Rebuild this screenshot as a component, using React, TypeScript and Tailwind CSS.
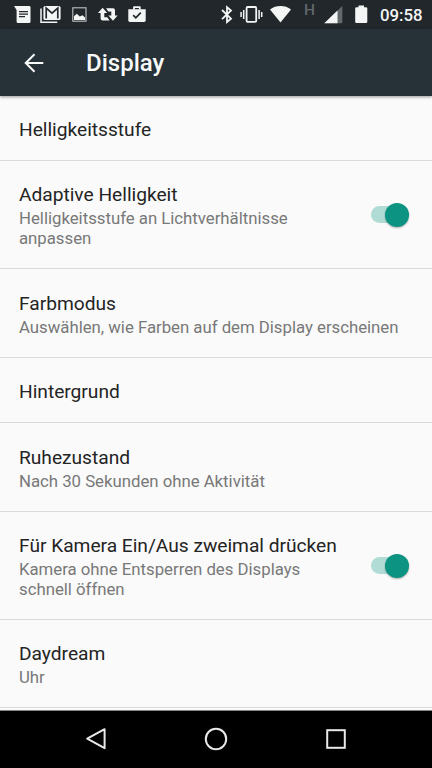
import { useState } from "react"
import clsx from "clsx"

const settings = [
  { title: "Helligkeitsstufe", height: "h-[65px]" },
  {
    title: "Adaptive Helligkeit",
    summary: "Helligkeitsstufe an Lichtverhältnisse anpassen",
    toggle: true,
    height: "h-[108px]",
  },
  { title: "Farbmodus", summary: "Auswählen, wie Farben auf dem Display erscheinen", height: "h-[89px]" },
  { title: "Hintergrund", height: "h-[65px]" },
  { title: "Ruhezustand", summary: "Nach 30 Sekunden ohne Aktivität", height: "h-[89px]" },
  {
    title: "Für Kamera Ein/Aus zweimal drücken",
    summary: "Kamera ohne Entsperren des Displays schnell öffnen",
    toggle: true,
    height: "h-[108px]",
  },
  { title: "Daydream", summary: "Uhr", height: "h-[88px]" },
]

function StatusBar() {
  return (
    <div className="flex h-[29px] items-start bg-[#21272b] pl-[14px] text-[#f4f6f6]">
      {/* Message */}
      <svg className="h-[29px] w-[17px]" viewBox="0 0 17 29" fill="currentColor">
        <path d="M0 6H15.2Q16.5 6 16.5 7.3V21.5Q16.5 23 15 23H4Q2.6 23 2.6 21.5V10Z" />
        <path d="M5 11.7H14M5 14.2H14M5 16.7H11" stroke="#21272b" strokeWidth="1.3" />
      </svg>
      {/* Gmail */}
      <svg className="ml-[9px] h-[29px] w-[21px]" viewBox="0 0 21 29" fill="none">
        <path d="M1 8.6V22.2H17.3" stroke="currentColor" strokeWidth="1.5" />
        <rect x="3.4" y="5.9" width="17.2" height="14.2" rx="1.6" fill="currentColor" />
        <path d="M6.2 18.6V8.2L12 13.2L17.8 8.2V18.6" stroke="#21272b" strokeWidth="1.7" />
      </svg>
      {/* Screenshot */}
      <svg className="ml-[11px] h-[29px] w-[15px]" viewBox="0 0 15 29">
        <rect x="0.8" y="7.8" width="13.2" height="13.4" fill="none" stroke="currentColor" strokeOpacity="0.75" strokeWidth="1.1" />
        <path d="M2 20V16.2L4.8 13.8L7.8 16.4L10.5 15.2L13 17.4V20Z" fill="currentColor" />
      </svg>
      {/* Retweet */}
      <svg className="ml-[11px] h-[29px] w-[20px]" viewBox="0 0 20 29" fill="currentColor">
        <path d="M4.6 7.8L9.2 13H6.3V17.2H9.3L11.5 20.4H4.6Q2.6 20.4 2.6 18.4V13H0Z" />
        <path d="M15 20.8L10.4 15.6H13.3V11.4H10.3L8.1 8.2H15Q17 8.2 17 10.2V15.6H19.6Z" />
      </svg>
      {/* Play Store */}
      <svg className="ml-[10px] h-[29px] w-[18px]" viewBox="0 0 18 29" fill="none">
        <path d="M6 9.5V7.2H11.8V9.5" stroke="currentColor" strokeWidth="1.8" strokeLinejoin="round" />
        <path d="M0.3 9.2H17.7V20.3Q17.7 22 16 22H2Q0.3 22 0.3 20.3Z" fill="currentColor" />
        <path d="M5.2 15.2L7.8 17.8L12.8 12.6" stroke="#21272b" strokeWidth="1.7" />
      </svg>

      {/* Bluetooth */}
      <svg className="ml-[75px] h-[29px] w-[12px]" viewBox="0 0 12 29" fill="none">
        <path d="M1 10L10 18.7L6 22V7.2L10 10.5L1 19.2" stroke="currentColor" strokeWidth="1.8" />
      </svg>
      {/* Vibrate */}
      <svg className="ml-[7px] h-[29px] w-[23px]" viewBox="0 0 23 29" fill="none" stroke="currentColor">
        <rect x="6.6" y="7" width="9.6" height="14.8" rx="1" strokeWidth="1.8" />
        <path d="M1.1 12V17M3.7 10V19M19.1 10V19M21.7 12V17" strokeWidth="1.5" />
      </svg>
      {/* Wi-Fi */}
      <svg className="ml-[7px] h-[29px] w-[21px]" viewBox="0 0 21 29" fill="currentColor">
        <path d="M10.5 22.5L0 9.4Q4.5 6 10.5 6T21 9.4Z" />
      </svg>
      <span className="ml-[13px] mt-[1px] w-[12px] text-[15.5px] leading-[18px] font-medium text-[#62686b]">H</span>
      {/* Signal */}
      <svg className="ml-[8px] h-[29px] w-[19px]" viewBox="0 0 19 29" fill="currentColor">
        <path d="M0.3 23.3L18.3 6V23.3Z" fill="#62686b" />
        <path d="M0.3 23.3L13.5 10.6V23.3Z" />
      </svg>
      {/* Battery */}
      <svg className="ml-[12px] h-[29px] w-[13px]" viewBox="0 0 13 29" fill="currentColor">
        <path d="M3.5 5.6H9V7.2H11Q12.3 7.2 12.3 8.5V21.8Q12.3 23.1 11 23.1H1.5Q0.2 23.1 0.2 21.8V8.5Q0.2 7.2 1.5 7.2H3.5Z" />
      </svg>
      <span className="ml-[12px] mt-[5px] text-[16.8px] leading-[20px] font-medium">09:58</span>
    </div>
  )
}

function Toolbar() {
  return (
    <header className="relative flex h-[67px] items-center bg-[#273238] pl-[24px] text-[#f8f9f9] shadow-[0_1px_3px_rgba(0,0,0,0.4)]">
      <svg className="h-[20px] w-[20px]" viewBox="0 0 20 20" fill="none" stroke="currentColor" strokeWidth="2">
        <path d="M19.3 10H1.8M10.5 1.2L1.7 10L10.5 18.8" />
      </svg>
      <h1 className="ml-[42px] text-[24px] leading-[28px] font-medium">Display</h1>
    </header>
  )
}

function Toggle() {
  const [on, setOn] = useState(true)

  return (
    <button
      role="switch"
      aria-checked={on}
      onClick={() => setOn(!on)}
      className={clsx("flex h-[17px] w-[38px] items-center rounded-full", on ? "justify-end bg-[#b0dcd5]" : "bg-gray-300")}
    >
      <span
        className={clsx(
          "size-[24px] shrink-0 rounded-full shadow-[0_1px_2px_rgba(0,0,0,0.3)]",
          on ? "bg-[#0c9382]" : "bg-gray-50",
        )}
      />
    </button>
  )
}

function NavBar() {
  return (
    <nav className="flex h-[57px] items-center justify-center gap-[96px] bg-black pb-[1px] text-[#e8e8e8]">
      <svg className="h-[24px] w-[24px]" viewBox="0 0 24 24" fill="none" stroke="currentColor" strokeWidth="2">
        <path d="M20.6 2.2V21.2L3.2 11.7Z" strokeLinejoin="round" />
      </svg>
      <svg className="h-[24px] w-[24px]" viewBox="0 0 24 24" fill="none" stroke="currentColor" strokeWidth="2">
        <circle cx="12" cy="12" r="10.2" />
      </svg>
      <svg className="h-[24px] w-[24px]" viewBox="0 0 24 24" fill="none" stroke="currentColor" strokeWidth="2">
        <rect x="3.2" y="3.2" width="17.6" height="17.6" />
      </svg>
    </nav>
  )
}

export default function App() {
  return (
    <div className="flex h-[768px] w-[432px] flex-col overflow-hidden bg-[#fafafa] font-['Roboto',sans-serif]">
      <StatusBar />
      <Toolbar />
      <main className="flex-1 overflow-hidden border-b border-[#858585]">
        {settings.map((item) => (
          <div
            key={item.title}
            className={clsx("flex items-center justify-between border-b border-[#dadada] pl-[19px] pr-[23.5px]", item.height)}
          >
            <div className={clsx("pt-[2px] tracking-[-0.02px]", item.toggle && "w-[330px]")}>
              <h2 className="text-[19.2px] leading-[23px] text-[#242424]">{item.title}</h2>
              {item.summary && (
                <p className={clsx("mt-[2px] text-[16.8px] leading-[20px] text-[#787878]", item.toggle && "w-[300px]")}>
                  {item.summary}
                </p>
              )}
            </div>
            {item.toggle && <Toggle />}
          </div>
        ))}
      </main>
      <NavBar />
    </div>
  )
}
